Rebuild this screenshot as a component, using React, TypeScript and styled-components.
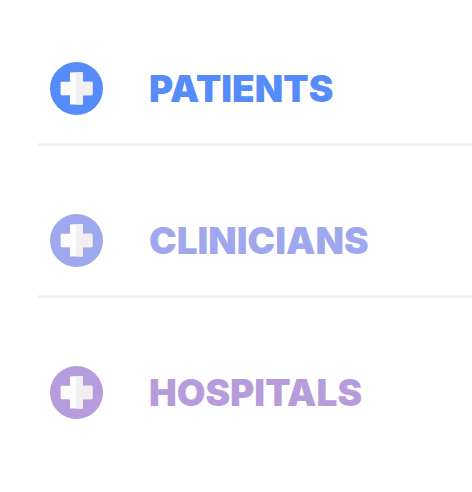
import React from "react";
import styled, { createGlobalStyle } from "styled-components";

const GlobalStyle = createGlobalStyle`
  body { margin: 0; background: #fff; }
`;

const AudienceList = styled.ul`
  list-style: none;
  margin: 0;
  padding: 34px 0 0 38px;
`;

const AudienceItem = styled.li`
  padding: 28px 12px;
  & + & { border-top: 3px solid #f2f2f2; padding-top: 68px; }
`;

const AudienceButton = styled.button<{ $color: string }>`
  display: flex;
  align-items: center;
  gap: 46px;
  width: 100%;
  padding: 0;
  border: 0;
  background: none;
  color: ${(p) => p.$color};
  font: 900 37px/53px Inter, "Liberation Sans", sans-serif;
  text-align: left;
  cursor: pointer;
`;

const Badge = styled.svg`
  flex: none;
  width: 53px;
  height: 53px;
`;

const audiences = [
  { name: "PATIENTS", color: "#568bfa" },
  { name: "CLINICIANS", color: "#9fa8ee" },
  { name: "HOSPITALS", color: "#b79cdb" },
];

function CrossBadge() {
  return (
    <Badge viewBox="0 0 53 53" aria-hidden="true">
      <circle cx="26.5" cy="26.5" r="26.5" fill="currentColor" />
      <path d="M21.2 10.2h10.6a1.2 1.2 0 0 1 1.2 1.2v8.4h8.3a1.2 1.2 0 0 1 1.2 1.2v11a1.2 1.2 0 0 1-1.2 1.2H33v8.2a1.2 1.2 0 0 1-1.2 1.2H21.2a1.2 1.2 0 0 1-1.2-1.2v-8.2h-8.2a1.2 1.2 0 0 1-1.2-1.2V21a1.2 1.2 0 0 1 1.2-1.2H20v-8.4a1.2 1.2 0 0 1 1.2-1.2z" fill="#fcfcfc" />
      <path d="M26.2 10.2h5.6a1.2 1.2 0 0 1 1.2 1.2v8.4h8.3a1.2 1.2 0 0 1 1.2 1.2v11a1.2 1.2 0 0 1-1.2 1.2H33v8.2a1.2 1.2 0 0 1-1.2 1.2h-5.6z" fill="#f1eff0" />
    </Badge>
  );
}

export default function App() {
  return (
    <>
      <GlobalStyle />
      <AudienceList>
        {audiences.map((a) => (
          <AudienceItem key={a.name}>
            <AudienceButton type="button" $color={a.color}>
              <CrossBadge />
              {a.name}
            </AudienceButton>
          </AudienceItem>
        ))}
      </AudienceList>
    </>
  );
}
